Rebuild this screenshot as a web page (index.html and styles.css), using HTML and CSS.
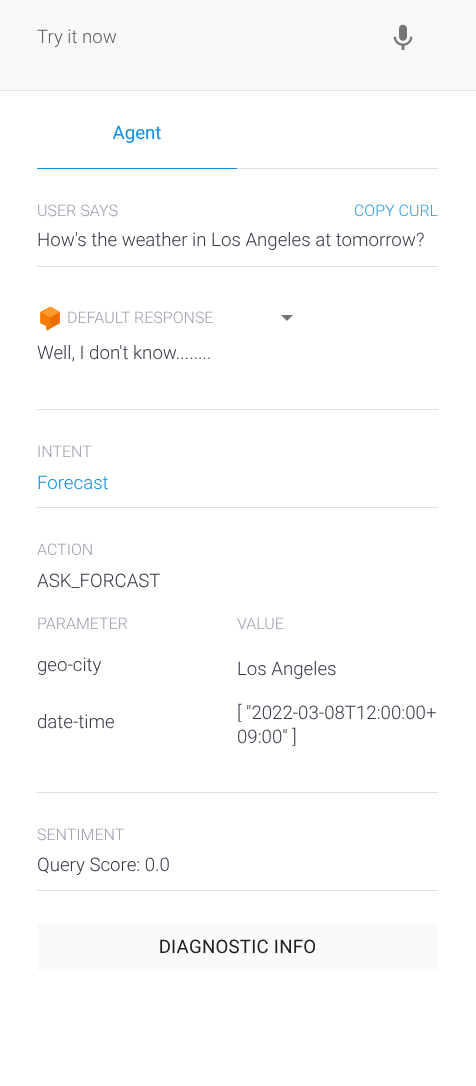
FILE: index.html
```html
<!DOCTYPE html>
<html lang="en">
<head>
<meta charset="utf-8">
<title>Try it now</title>
<link rel="stylesheet" href="styles.css">
</head>
<body>
<header class="try-bar">
  <span class="try-text">Try it now</span>
  <svg class="mic" viewBox="0 0 24 24" width="32" height="32"><path fill="#757575" d="M12 14c1.66 0 3-1.34 3-3V5c0-1.66-1.34-3-3-3S9 3.34 9 5v6c0 1.66 1.34 3 3 3zm5.3-3c0 3-2.54 5.1-5.3 5.1S6.7 14 6.7 11H5c0 3.41 2.72 6.23 6 6.72V21h2v-3.28c3.28-.48 6-3.3 6-6.72h-1.7z"/></svg>
</header>
<main class="panel">
  <nav class="tabs"><div class="tab">Agent</div></nav>

  <section class="sec sec-says">
    <div class="label-row"><span class="label">USER SAYS</span><span class="curl">COPY CURL</span></div>
    <div class="val">How's the weather in Los Angeles at tomorrow?</div>
  </section>

  <section class="sec sec-resp">
    <div class="resp-head">
      <svg class="cube" viewBox="0 0 24 26" width="23" height="25">
        <path fill="#f57c00" stroke="#f57c00" stroke-width="1.500" stroke-linejoin="round" d="M12 1.500l9 5v11l-9 5-3.500 2.300-.7-4.700-5.800-2.600v-11z"/>
        <path fill="#ff9a2e" d="M12 1l9.500 5.500L12 12 2.500 6.500z"/>
        <path fill="#ef6c00" d="M12 12l9.500-5.500v11L12 23z"/>
      </svg>
      <span class="label">DEFAULT RESPONSE</span>
      <span class="caret"></span>
    </div>
    <div class="val">Well, I don't know........</div>
  </section>

  <section class="sec sec-intent">
    <div class="label">INTENT</div>
    <div class="val link">Forecast</div>
  </section>

  <section class="sec sec-action">
    <div class="label">ACTION</div>
    <div class="val">ASK_FORCAST</div>
    <div class="param-head">
      <div class="label">PARAMETER</div><div class="label">VALUE</div>
    </div>
    <div class="params">
      <div class="val key">geo-city</div><div class="val">Los Angeles</div>
      <div class="val key">date-time</div><div class="val">[ "2022-03-08T12:00:00+09:00" ]</div>
    </div>
  </section>

  <section class="sec sec-sent">
    <div class="label">SENTIMENT</div>
    <div class="val">Query Score: 0.0</div>
  </section>

  <button class="diag" type="button">DIAGNOSTIC INFO</button>
</main>
</body>
</html>
```

FILE: styles.css
```css
* { box-sizing: border-box; }
html, body { margin: 0; padding: 0; background: #fff; }
body { font-family: Roboto, sans-serif; width: 476px; height: 1086px; overflow: hidden; color: #39393f; text-rendering: geometricPrecision; }

.try-bar { height: 91px; background: #f8f8f8; border-bottom: 1px solid #e3e3e3; display: flex; align-items: flex-start; justify-content: space-between; padding: 24px 57px 0 37px; will-change: transform; }
.try-text { font-size: 18.67px; line-height: 26px; font-weight: 300; color: #5f5f5f; }
.mic { display: block; margin-top: -2px; }

.panel { padding: 0 38px 0 37px; will-change: transform; }
.tabs { height: 78px; border-bottom: 1px solid #e0e0e0; }
.tab { width: 200px; height: 78px; border-bottom: 1px solid #0f8fe0; margin-bottom: -1px; text-align: center; color: #0f8fe0; font-size: 18.67px; line-height: 20px; padding-top: 32px; }

.sec { border-bottom: 1px solid #e0e0e0; }
.label { font-size: 16px; line-height: 20px; font-weight: 300; color: #9b9fac; }
.val { font-size: 18.67px; line-height: 24px; font-weight: 300; color: #363845; }
.link { color: #0f8fe0; }

.sec-says { height: 98px; padding-top: 32px; }
.label-row { display: flex; justify-content: space-between; }
.curl { font-size: 16px; line-height: 20px; font-weight: 300; color: #2a9be6; }
.sec-says .val { margin-top: 7px; }

.sec-resp { height: 143px; padding-top: 39px; }
.resp-head { display: flex; align-items: center; height: 24px; }
.cube { display: block; margin-right: 5px; flex: none; margin-left: 2px; }
.caret { width: 0; height: 0; border-left: 6px solid transparent; border-right: 6px solid transparent; border-top: 6px solid #757575; margin-left: 68px; }
.sec-resp .val { margin-top: 11px; }

.sec-intent { height: 98px; padding-top: 32px; }
.sec-intent .val { margin-top: 9px; }

.sec-action { height: 285px; padding-top: 32px; }
.sec-action > .val { margin-top: 9px; }
.param-head { display: grid; grid-template-columns: 200px 1fr; margin-top: 21px; }
.params { display: grid; grid-template-columns: 200px 1fr; row-gap: 17px; align-items: center; margin-top: 19px; }
.params .val { word-break: break-all; }
.params .key { padding-bottom: 7px; }

.sec-sent { height: 98px; padding-top: 32px; }
.sec-sent .val { margin-top: 8px; }

.diag { display: block; width: 100%; height: 48px; margin-top: 32px; padding: 0; background: #fafafa; border: 0; font-family: Roboto, sans-serif; font-size: 18.67px; letter-spacing: 0.25px; color: #212121; text-rendering: geometricPrecision; }
```
